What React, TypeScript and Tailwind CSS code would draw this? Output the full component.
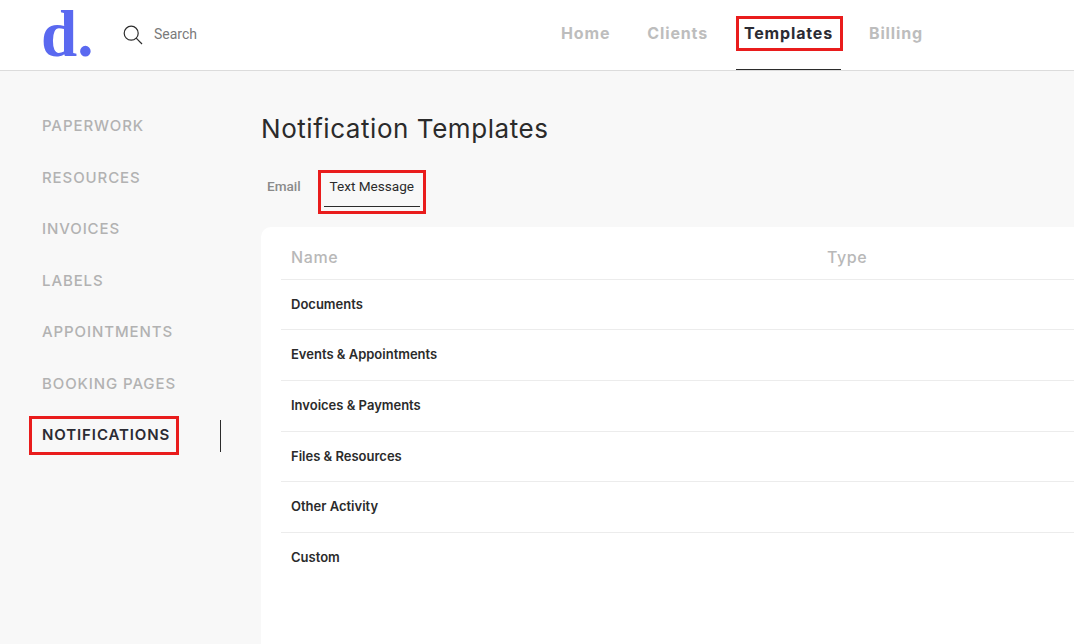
import React from "react";

const sideItems = ["Paperwork", "Resources", "Invoices", "Labels", "Appointments", "Booking Pages"];
const navFont = "font-['Inter','Liberation_Sans',sans-serif]";
const rows = [
  { name: "Documents", height: "h-[50px]" },
  { name: "Events & Appointments", height: "h-[51px]" },
  { name: "Invoices & Payments", height: "h-[51px]" },
  { name: "Files & Resources", height: "h-[50px]" },
  { name: "Other Activity", height: "h-[51px]" },
];

const NavLink = ({ label, left }: { label: string; left: string }) => (
  <a className={`${left} pb-[4px] text-[16px] font-bold tracking-[0.85px] text-[#bdbdbd] ${navFont}`}>{label}</a>
);

export default function App() {
  return (
    <div className="h-[644px] w-[1074px] overflow-hidden bg-[#f8f8f8] font-['Inter','Liberation_Sans',sans-serif]">
      <header className="flex h-[71px] items-center border-b border-[#dcdcdc] bg-white">
        <div className="ml-[41px] w-[62px] pb-[2px] font-['Liberation_Serif',serif] text-[65px] leading-[66px] font-bold text-[#5a69f0]">
          d.
        </div>
        <svg className="ml-[20px] mb-[1px] h-[20px] w-[20px]" viewBox="0 0 20 20" fill="none" stroke="#2c2c2c" strokeWidth="1.2">
          <circle cx="8.2" cy="8.2" r="7" />
          <path d="M13.2 13.2 L19 19" />
        </svg>
        <span className="ml-[11px] pb-[2px] font-['Roboto',sans-serif] text-[14px] text-[#7a7a7a]">Search</span>
        <nav className="ml-[364px] flex h-full items-center">
          <NavLink label="Home" left="" />
          <NavLink label="Clients" left="ml-[37px]" />
          <div className="relative ml-[28px] flex h-full w-[105px] items-center justify-center border-b border-[#2b2b2b] pb-[4px]">
            <span className={`text-[16px] font-bold tracking-[0.85px] text-[#2b2b33] ${navFont}`}>Templates</span>
            <div className="absolute top-[16px] left-0 h-[35px] w-[107px] border-[3px] border-[#e91c1c]" />
          </div>
          <NavLink label="Billing" left="ml-[28px]" />
        </nav>
      </header>

      <div className="flex">
        <aside className="w-[261px] shrink-0 pt-[29.5px]">
          {sideItems.map((item) => (
            <div
              key={item}
              className="ml-[42px] flex h-[51.5px] items-center text-[15px] font-medium tracking-[0.9px] text-[#b2b2b2] uppercase"
            >
              {item}
            </div>
          ))}
          <div className="relative ml-[42px] flex h-[51.5px] items-center text-[15px] font-semibold tracking-[0.9px] text-[#2b2b33] uppercase">
            Notifications
            <div className="absolute top-[6.5px] left-[-13px] h-[39px] w-[150px] border-[3px] border-[#e91c1c]" />
            <div className="absolute top-[10.5px] left-[178px] h-[32px] w-px bg-[#2b2b2b]" />
          </div>
        </aside>

        <main className="min-w-0 flex-1">
          <h1 className="mt-[42px] text-[26px] leading-[32px] font-normal tracking-[0.55px] text-[#2b2b2b]">
            Notification Templates
          </h1>
          <div className="mt-[19px] flex h-[43px] items-start font-['Roboto',sans-serif] text-[13.6px]">
            <span className="ml-[6px] pt-[12px] font-medium text-[#8a8a8a]">Email</span>
            <div className="relative ml-[23px] h-[43px] w-[96px] border-b border-[#2b2b2b] pt-[12px] text-center text-[#2b2b2b]">
              Text Message
              <div className="absolute top-[6px] left-[-6px] h-[44px] w-[108px] border-[3px] border-[#e91c1c]" />
            </div>
          </div>
          <section className="mt-[20px] h-[430px] rounded-tl-[10px] bg-white pl-[20px]">
            <div className="flex h-[53px] items-center border-b border-[#ececec] pt-[8px] pl-[10px] text-[16px] font-medium tracking-[0.6px] text-[#b8b8b8]">
              <span className="w-[536px]">Name</span>
              <span>Type</span>
            </div>
            {rows.map((row) => (
              <div
                key={row.name}
                className={`flex ${row.height} items-center border-b border-[#ececec] pl-[10px] text-[13px] font-semibold text-[#2b2b2b]`}
              >
                {row.name}
              </div>
            ))}
            <div className="flex h-[50px] items-center pb-[1px] pl-[10px] text-[13px] font-semibold text-[#2b2b2b]">Custom</div>
          </section>
        </main>
      </div>
    </div>
  );
}
